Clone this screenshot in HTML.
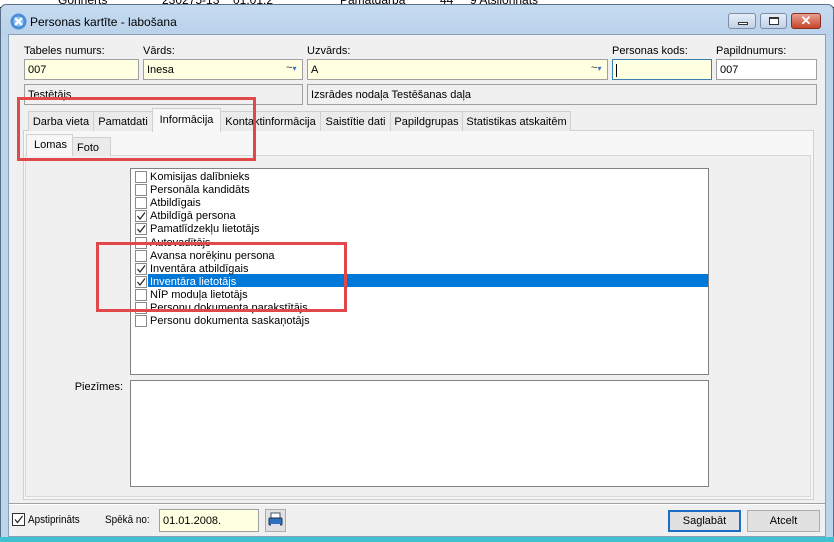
<!DOCTYPE html>
<html><head><meta charset="utf-8"><style>
*{box-sizing:border-box;margin:0;padding:0}
body{width:834px;height:542px;overflow:hidden;background:#fff;font-family:"Liberation Sans",sans-serif;font-size:11px;color:#000;position:relative}
.a{position:absolute}
.lbl{position:absolute;white-space:nowrap}
.inp{position:absolute;border:1px solid #a0a0a0;background:#ffffe1;height:21px;padding:4px 0 0 3px;white-space:nowrap;overflow:hidden}
.tab{position:absolute;top:111px;height:20px;border:1px solid #d0d0d0;border-bottom:none;background:#ebebeb;padding:4px 0 0 0;text-align:center;white-space:nowrap;overflow:hidden}
.cb{position:absolute;width:12px;height:12px;border:1px solid #8a8a8a;background:#fff}
.it{position:absolute;left:150px;white-space:nowrap;line-height:13px}
.red{position:absolute;border:3px solid #e0484a}
.btn{position:absolute;border:1px solid #adadad;background:#e1e1e1;text-align:center;font-size:11px;padding-top:4px}
.wb{position:absolute;top:13px;height:16px;border:1px solid #7a8ea8;border-radius:3px;background:linear-gradient(#e6eef8,#c0d0e4)}
</style></head><body>
<div class="a" style="left:0;top:0;width:834px;height:8px;background:#fff;border-bottom:1px solid #000"></div>
<div class="a" style="left:0;top:0;width:834px;height:5px;overflow:hidden;font-size:12px;color:#000">
<span class="a" style="left:58px;top:-7px">Gonnerts</span><span class="a" style="left:162px;top:-7px">230275-13</span><span class="a" style="left:233px;top:-7px">01.01.2</span><span class="a" style="left:340px;top:-7px">Pamatdarba</span><span class="a" style="left:440px;top:-7px">44</span><span class="a" style="left:470px;top:-7px">9 Atsijonnats</span></div>
<div class="a" style="left:0;top:4px;width:834px;height:538px;background:#bcd4ec;border:1px solid #5a6f88;border-radius:6px 6px 0 0"></div>
<div class="a" style="left:1px;top:5px;width:832px;height:30px;border-radius:6px 6px 0 0;background:linear-gradient(#c6dbf0,#b9d1ea)"></div>
<div class="a" style="left:0;top:537px;width:834px;height:5px;background:#40c0d0"></div>
<svg class="a" style="left:10px;top:13px" width="17" height="17" viewBox="0 0 17 17"><circle cx="8.5" cy="8.5" r="8" fill="#4a8fd8"/><circle cx="8.5" cy="8.5" r="5" fill="#8cc4f4"/><path d="M5 5l7 7M12 5l-7 7" stroke="#fff" stroke-width="2.2"/></svg>
<div class="lbl" style="left:30px;top:15px;font-size:12px;color:#000">Personas kartīte - labošana</div>
<div class="wb" style="left:728px;width:28px"><div class="a" style="left:9px;top:8px;width:10px;height:3px;border:1px solid #333;background:#fff"></div></div>
<div class="wb" style="left:760px;width:27px"><div class="a" style="left:8px;top:3px;width:10px;height:8px;border:1px solid #333;border-top-width:2px;background:#fff"></div></div>
<div class="a" style="left:791px;top:13px;width:30px;height:16px;border:1px solid #8a3020;border-radius:3px;background:linear-gradient(#e8a090,#c8442c);color:#fff;font-weight:bold;font-size:13px;text-align:center;line-height:14px">✕</div>
<div class="a" style="left:8px;top:34px;width:818px;height:503px;background:#f0f0f0;border:1px solid #8aa0b8"></div>
<div class="lbl" style="left:24px;top:45px">Tabeles numurs:</div>
<div class="lbl" style="left:143px;top:45px">Vārds:</div>
<div class="lbl" style="left:307px;top:45px">Uzvārds:</div>
<div class="lbl" style="left:612px;top:45px">Personas kods:</div>
<div class="lbl" style="left:716px;top:45px">Papildnumurs:</div>
<div class="inp" style="left:24px;top:59px;width:115px">007</div>
<div class="inp" style="left:143px;top:59px;width:160px">Inesa<span class="a" style="left:142px;top:2px;color:#333">~<span style="color:#3a70c0;font-size:8px">▾</span></span></div>
<div class="inp" style="left:307px;top:59px;width:301px">A<span class="a" style="left:283px;top:2px;color:#333">~<span style="color:#3a70c0;font-size:8px">▾</span></span></div>
<div class="inp" style="left:612px;top:59px;width:100px;border-color:#3c7fb1"><span style="border-left:1px solid #000;display:inline-block;height:13px"></span></div>
<div class="inp" style="left:716px;top:59px;width:101px;background:#fff">007</div>
<div class="inp" style="left:24px;top:84px;width:279px;background:#f0f0f0">Testētājs</div>
<div class="inp" style="left:307px;top:84px;width:510px;background:#f0f0f0">Izsrādes nodaļa Testēšanas daļa</div>
<div class="a" style="left:23px;top:130px;width:791px;height:370px;border:1px solid #d0d0d0;background:#f7f7f7"></div>
<div class="tab" style="left:28px;width:66px">Darba vieta</div>
<div class="tab" style="left:93px;width:60px">Pamatdati</div>
<div class="tab" style="left:220px;width:101px">Kontaktinformācija</div>
<div class="tab" style="left:320px;width:71px">Saistītie dati</div>
<div class="tab" style="left:390px;width:73px">Papildgrupas</div>
<div class="tab" style="left:462px;width:109px">Statistikas atskaitēm</div>
<div class="tab" style="left:152px;top:108px;height:24px;width:69px;background:#f7f7f7;padding-top:5px">Informācija</div>
<div class="a" style="left:25px;top:155px;width:786px;height:342px;border:1px solid #d8d8d8;background:#f0f0f0"></div>
<div class="a" style="left:72px;top:137px;width:39px;height:19px;border:1px solid #d0d0d0;border-bottom:none;background:#ebebeb;padding:4px 0 0 4px">Foto</div>
<div class="a" style="left:26px;top:134px;width:47px;height:22px;border:1px solid #d0d0d0;border-bottom:none;background:#f7f7f7;padding:4px 0 0 7px">Lomas</div>
<div class="a" style="left:130px;top:168px;width:579px;height:207px;border:1px solid #828282;background:#fff"></div>
<div class="a" style="left:148px;top:274px;width:560px;height:13px;background:#0078d7"></div>
<div id="list"></div>
<div class="lbl" style="left:60px;top:381px;width:63px;text-align:right">Piezīmes:</div>
<div class="a" style="left:130px;top:380px;width:579px;height:107px;border:1px solid #828282;background:#fff"></div>
<div class="red" style="left:17px;top:97px;width:239px;height:64px"></div>
<div class="red" style="left:96px;top:242px;width:251px;height:70px"></div>
<div class="a" style="left:9px;top:503px;width:816px;height:1px;background:#a0a0a0"></div>
<div class="a" style="left:9px;top:504px;width:816px;height:1px;background:#fff"></div>
<div class="cb" style="left:12px;top:513px;width:13px;height:13px;border-color:#333"><svg width="11" height="11" class="a" style="left:0;top:0"><path d="M2 5.5l2.5 3L9.5 2" stroke="#222" stroke-width="1.2" fill="none"/></svg></div>
<div class="lbl" style="left:28px;top:514px;font-size:11px;transform:scaleX(.9);transform-origin:left">Apstiprināts</div>
<div class="lbl" style="left:105px;top:514px;font-size:11px;transform:scaleX(.9);transform-origin:left">Spēkā no:</div>
<div class="inp" style="left:159px;top:509px;width:100px;height:23px;padding-top:5px">01.01.2008.</div>
<div class="a" style="left:265px;top:509px;width:21px;height:23px;border:1px solid #adadad;background:#e1e1e1"><svg width="19" height="21"><rect x="5" y="3" width="9" height="6" fill="#fff" stroke="#456"/><rect x="3" y="8" width="13" height="7" rx="1" fill="#2d6fc0" stroke="#234"/><rect x="5" y="14" width="9" height="3" fill="#dde"/></svg></div>
<div class="btn" style="left:668px;top:510px;width:73px;height:22px;border:2px solid #1a6fc4;padding-top:3px">Saglabāt</div>
<div class="btn" style="left:747px;top:510px;width:73px;height:22px">Atcelt</div>
<script>
var items=[["Komisijas dalībnieks",0],["Personāla kandidāts",0],["Atbildīgais",0],["Atbildīgā persona",1],["Pamatlīdzekļu lietotājs",1],["Autovadītājs",0],["Avansa norēķinu persona",0],["Inventāra atbildīgais",1],["Inventāra lietotājs",1],["NĪP moduļa lietotājs",0],["Personu dokumenta parakstītājs",0],["Personu dokumenta saskaņotājs",0]];
var h="";items.forEach(function(it,i){var y=170+i*13.1;var sel=i==8;
h+='<div class="cb" style="left:135px;top:'+(y+1)+'px">'+(it[1]?'<svg width="10" height="10" class="a" style="left:0;top:0"><path d="M1.5 5l2.5 3L9 1.5" stroke="#222" stroke-width="1.2" fill="none"/></svg>':'')+'</div>';
h+='<div class="it" style="top:'+(y+1)+'px;'+(sel?'color:#fff':'')+'">'+it[0]+'</div>';});
document.getElementById("list").innerHTML=h;
</script>
</body></html>
